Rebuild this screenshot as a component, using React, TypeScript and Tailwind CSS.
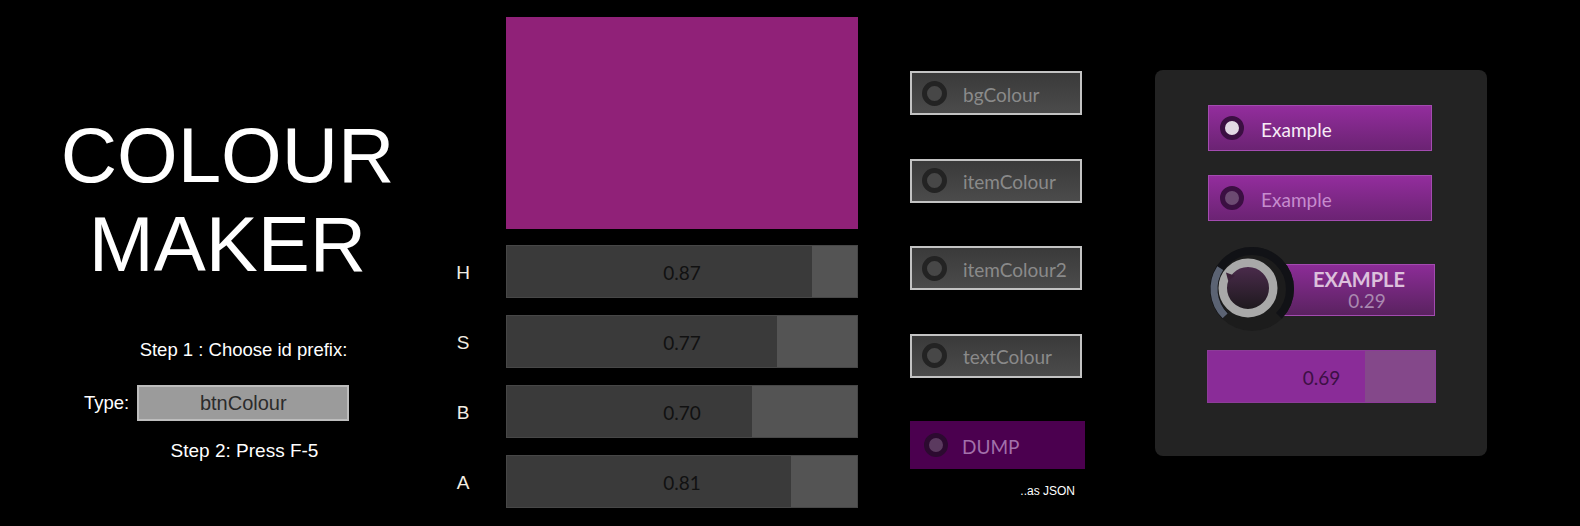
import React from 'react';

const hsba = [
  { label: 'H', value: 0.87 },
  { label: 'S', value: 0.77 },
  { label: 'B', value: 0.7 },
  { label: 'A', value: 0.81 },
];

const ids = ['bgColour', 'itemColour', 'itemColour2', 'textColour'];

// angle in degrees, measured clockwise from 12 o'clock
const pt = (cx: number, cy: number, r: number, a: number) => {
  const rad = (a * Math.PI) / 180;
  return [cx + r * Math.sin(rad), cy - r * Math.cos(rad)];
};

const arc = (cx: number, cy: number, r: number, a0: number, a1: number) => {
  const [x0, y0] = pt(cx, cy, r, a0);
  const [x1, y1] = pt(cx, cy, r, a1);
  const large = a1 - a0 > 180 ? 1 : 0;
  return `M ${x0} ${y0} A ${r} ${r} 0 ${large} 1 ${x1} ${y1}`;
};

const ValueBar = ({ value }: { value: number }) => (
  <div className="relative h-[53px] w-[352px] border border-[#474747] bg-[#545454]">
    <div className="h-full bg-[#3a3a3a]" style={{ width: `${value * 100}%` }} />
    <div className="absolute inset-0 flex translate-y-[2px] items-center justify-center font-['Lato',sans-serif] text-[19px] text-[#111111]">
      {value.toFixed(2)}
    </div>
  </div>
);

const IdButton = ({ label }: { label: string }) => (
  <div className="flex h-[44px] w-[172px] items-center gap-[16px] border-2 border-[#c3c3c3] bg-linear-to-b from-[#3a3a3a] to-[#4b4b4b] pl-[10px]">
    <span className="h-[25px] w-[25px] rounded-full border-[5px] border-[#232323] bg-[#474747]" />
    <span className="translate-y-[2px] font-['Lato',sans-serif] text-[19px] text-[#8a8a8a]">{label}</span>
  </div>
);

const ExampleButton = ({ on }: { on?: boolean }) => (
  <div className="ml-[1px] flex h-[46px] w-[224px] items-center gap-[17px] border border-[#a34bb0] bg-linear-to-b from-[#932d9d] to-[#6b2373] pl-[11px]">
    <span
      className={`h-[24px] w-[24px] rounded-full border-[5px] border-[#3b0f42] ${
        on ? 'bg-[#e2d8e4]' : 'bg-[#6c4a72]'
      }`}
    />
    <span
      className={`translate-y-[2px] font-['Lato',sans-serif] text-[19px] ${
        on ? 'text-[#f6ecf6]' : 'text-[#c68cce]'
      }`}
    >
      Example
    </span>
  </div>
);

const Knob = ({ value }: { value: number }) => {
  const c = 44;
  // the face sits a little left of the track's centre
  const fx = c - 4;
  const fy = c - 1;
  const start = 225;
  const end = start + 270 * value;
  const [tx0, ty0] = pt(fx, fy, 21, end - 14);
  const [tx1, ty1] = pt(fx, fy, 27, end + 2);
  const [tx2, ty2] = pt(fx, fy, 18, end + 10);
  return (
    <svg width="88" height="88" viewBox="0 0 88 88" className="relative z-10 ml-[1px] shrink-0">
      <defs>
        <linearGradient id="knobFace" x1="0" y1="0" x2="0" y2="1">
          <stop offset="0" stopColor="#4b2b4c" />
          <stop offset="1" stopColor="#1d191d" />
        </linearGradient>
      </defs>
      <circle cx={c} cy={c} r="42" fill="#1c1c1c" />
      <path d={arc(c, c, 38, 225, 495)} stroke="#111216" strokeWidth="8" fill="none" />
      <path d={arc(c, c, 38, start, end)} stroke="#5b6373" strokeWidth="7" fill="none" />
      <circle cx={fx} cy={fy} r="22" fill="url(#knobFace)" />
      <circle cx={fx} cy={fy} r="25.25" stroke="#a9a9a9" strokeWidth="8.5" fill="none" />
      <polygon points={`${tx0},${ty0} ${tx1},${ty1} ${tx2},${ty2}`} fill="#3a2038" />
    </svg>
  );
};

export default function App() {
  return (
    <div className="flex h-[526px] w-[1580px] overflow-hidden bg-black">
      {/* Left: title + steps */}
      <div className="flex w-[455px] shrink-0 flex-col pt-[111px] font-['Liberation_Sans',Arial,sans-serif] text-white">
        <h1 className="text-center text-[78px] leading-[89px] font-normal">
          COLOUR
          <br />
          MAKER
        </h1>
        <p className="mt-[50px] pl-[32px] text-center text-[18.5px] leading-[22px]">
          Step 1 : Choose id prefix:
        </p>
        <div className="mt-[24px] flex items-center gap-[8px] pl-[84px]">
          <span className="text-[18.5px] leading-[22px]">Type:</span>
          <div className="flex h-[36px] w-[212px] items-center justify-center border-2 border-[#bdbdbd] bg-[#9b9b9b] text-[20px] text-[#2b2b2b]">
            btnColour
          </div>
        </div>
        <p className="mt-[19px] pl-[34px] text-center text-[19px] leading-[22px]">Step 2: Press F-5</p>
      </div>

      {/* Swatch + HSBA */}
      <div className="flex shrink-0 flex-col pt-[17px]">
        <div className="ml-[51px] h-[212px] w-[352px] bg-[#902178]" />
        <div className="mt-[16px] flex flex-col gap-[17px]">
          {hsba.map((row) => (
            <div key={row.label} className="flex items-center">
              <span className="w-[16px] translate-y-[2px] text-center font-['Liberation_Sans',Arial,sans-serif] text-[19px] text-[#f2ede2]">
                {row.label}
              </span>
              <div className="ml-[35px]">
                <ValueBar value={row.value} />
              </div>
            </div>
          ))}
        </div>
      </div>

      {/* Id buttons */}
      <div className="ml-[52px] flex w-[175px] shrink-0 flex-col pt-[71px]">
        <div className="flex flex-col gap-[43.5px]">
          {ids.map((id) => (
            <IdButton key={id} label={id} />
          ))}
        </div>
        <div className="mt-[43.5px] flex h-[48px] w-[175px] items-center gap-[14px] bg-[#4b004f] pl-[14px]">
          <span className="h-[24px] w-[24px] rounded-full border-[5px] border-[#2c0a30] bg-[#5b3a5f]" />
          <span className="translate-y-[2px] font-['Lato',sans-serif] text-[19px] text-[#a270aa]">DUMP</span>
        </div>
        <p className="mt-[15px] pr-[10px] text-right font-['Liberation_Sans',Arial,sans-serif] text-[12px] leading-[14px] text-white">
          ..as JSON
        </p>
      </div>

      {/* Preview panel */}
      <div className="mt-[70px] ml-[70px] flex h-[386px] w-[332px] shrink-0 flex-col rounded-lg bg-[#232323] pt-[35px] pl-[52px]">
        <ExampleButton on />
        <div className="mt-[24px]">
          <ExampleButton />
        </div>
        <div className="mt-[24px] flex items-center">
          <Knob value={0.29} />
          <div className="-ml-[13px] flex h-[52px] w-[152px] translate-y-[1px] flex-col items-center justify-center border border-[#a34bb0] bg-linear-to-b from-[#8c2c97] to-[#5a2260] font-['Lato',sans-serif] leading-[22px]">
            <span className="text-[20px] font-bold text-[#dcc0dc]">EXAMPLE</span>
            <span className="pl-[16px] text-[19px] text-[#a988b0]">0.29</span>
          </div>
        </div>
        <div className="relative mt-[17px] h-[53px] w-[229px] border border-[#8c3c98] bg-[#84488a]">
          <div className="h-full bg-[#8a2c98]" style={{ width: '69%' }} />
          <div className="absolute inset-0 flex translate-y-[2px] items-center justify-center font-['Lato',sans-serif] text-[19px] text-[#3c1044]">
            0.69
          </div>
        </div>
      </div>
    </div>
  );
}
